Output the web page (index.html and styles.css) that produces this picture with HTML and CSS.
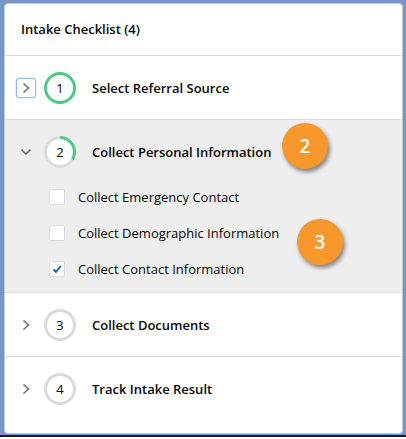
FILE: index.html
```html
<!DOCTYPE html>
<html lang="en">
<head>
    <meta charset="UTF-8">
    <title>Intake Checklist</title>
    <link rel="stylesheet" href="styles.css">
</head>
<body>
    <div class="frame">
        <div class="card">
            <div class="card-header">Intake Checklist (4)</div>

            <!-- Step 1 -->
            <div class="step">
                <div class="step-row">
                    <button class="toggle toggle-focus">
                        <svg width="10" height="12" viewBox="0 0 10 12"><path d="M2.5 1.5 L7.5 6 L2.5 10.5" fill="none" stroke="#706e6b" stroke-width="1.6"/></svg>
                    </button>
                    <div class="step-ring">
                        <svg width="32" height="32" viewBox="0 0 32 32">
                            <circle cx="16" cy="16" r="14.5" fill="#fff" stroke="#4bca81" stroke-width="3"/>
                        </svg>
                        <span class="step-num">1</span>
                    </div>
                    <div class="step-title">Select Referral Source</div>
                </div>
            </div>

            <!-- Step 2 (expanded) -->
            <div class="step step-open">
                <div class="step-row">
                    <button class="toggle">
                        <svg width="12" height="10" viewBox="0 0 12 10"><path d="M1.5 2.5 L6 7 L10.5 2.5" fill="none" stroke="#706e6b" stroke-width="1.6"/></svg>
                    </button>
                    <div class="step-ring">
                        <svg width="32" height="32" viewBox="0 0 32 32">
                            <circle cx="16" cy="16" r="14.5" fill="#fff" stroke="#dddbda" stroke-width="3"/>
                            <circle cx="16" cy="16" r="14.5" fill="none" stroke="#4bca81" stroke-width="3"
                                stroke-dasharray="30.4 100" transform="rotate(-90 16 16)"/>
                        </svg>
                        <span class="step-num">2</span>
                    </div>
                    <div class="step-title">Collect Personal Information</div>
                </div>
                <ul class="tasks">
                    <li class="task"><span class="checkbox"></span>Collect Emergency Contact</li>
                    <li class="task"><span class="checkbox"></span>Collect Demographic Information</li>
                    <li class="task">
                        <span class="checkbox">
                            <svg width="10" height="10" viewBox="0 0 10 10"><path d="M1.5 5.5 L4 8 L8.8 2" fill="none" stroke="#0b5cab" stroke-width="1.8"/></svg>
                        </span>Collect Contact Information
                    </li>
                </ul>
            </div>

            <!-- Step 3 -->
            <div class="step">
                <div class="step-row">
                    <button class="toggle">
                        <svg width="10" height="12" viewBox="0 0 10 12"><path d="M2.5 1.5 L7.5 6 L2.5 10.5" fill="none" stroke="#706e6b" stroke-width="1.6"/></svg>
                    </button>
                    <div class="step-ring">
                        <svg width="32" height="32" viewBox="0 0 32 32">
                            <circle cx="16" cy="16" r="14.5" fill="#fff" stroke="#dddbda" stroke-width="3"/>
                        </svg>
                        <span class="step-num">3</span>
                    </div>
                    <div class="step-title">Collect Documents</div>
                </div>
            </div>

            <!-- Step 4 -->
            <div class="step step-last">
                <div class="step-row">
                    <button class="toggle">
                        <svg width="10" height="12" viewBox="0 0 10 12"><path d="M2.5 1.5 L7.5 6 L2.5 10.5" fill="none" stroke="#706e6b" stroke-width="1.6"/></svg>
                    </button>
                    <div class="step-ring">
                        <svg width="32" height="32" viewBox="0 0 32 32">
                            <circle cx="16" cy="16" r="14.5" fill="#fff" stroke="#dddbda" stroke-width="3"/>
                        </svg>
                        <span class="step-num">4</span>
                    </div>
                    <div class="step-title">Track Intake Result</div>
                </div>
            </div>

            <!-- callout markers -->
            <div class="callout callout-2">2</div>
            <div class="callout callout-3">3</div>
        </div>
    </div>
</body>
</html>
```

FILE: styles.css
```css
body {
    margin: 0;
    font-family: "Open Sans", Lato, sans-serif;
    color: #080707;
}

.frame {
    height: 437px;
    background-color: #7496c8;
    border-bottom: 2px solid #1b1b1b;
    padding: 3px 3px 1px 4px;
    box-sizing: border-box;
}

.card {
    position: relative;
    height: 100%;
    background-color: #ffffff;
    border: 1px solid #c9c9c9;
    border-radius: 4px;
    box-sizing: border-box;
    overflow: hidden;
}

.card-header {
    height: 51px;
    line-height: 51px;
    padding-left: 16px;
    font-size: 13px;
    font-weight: 600;
    border-bottom: 1px solid #dddbda;
}

.step {
    border-bottom: 1px solid #dddbda;
}

.step-last {
    border-bottom: none;
}

.step-open {
    background-color: #eeeeee;
    padding-bottom: 5px;
}

.step-row {
    height: 63px;
    display: flex;
    align-items: center;
    padding-left: 11px;
}

.toggle {
    width: 20px;
    height: 20px;
    padding: 0;
    margin-right: 8px;
    display: flex;
    align-items: center;
    justify-content: center;
    background: transparent;
    border: 1px solid transparent;
    border-radius: 3px;
}

.toggle-focus {
    border-color: #8fb8ea;
    background-color: #ffffff;
    box-shadow: 0 0 2px #b6d3f5;
}

.step-ring {
    position: relative;
    width: 32px;
    height: 32px;
    margin-right: 16px;
}

.step-ring svg {
    display: block;
}

.step-num {
    position: absolute;
    inset: 0;
    display: flex;
    align-items: center;
    justify-content: center;
    font-size: 13px;
}

.step-title {
    font-size: 13px;
    font-weight: 600;
}

.tasks {
    list-style: none;
    margin: -4px 0 0;
    padding: 0;
}

.task {
    height: 36px;
    display: flex;
    align-items: center;
    padding-left: 44px;
    font-size: 13px;
}

.checkbox {
    width: 14px;
    height: 14px;
    margin-right: 13px;
    background-color: #ffffff;
    border: 1px solid #dddbda;
    border-radius: 2px;
    display: flex;
    align-items: center;
    justify-content: center;
}

.callout {
    position: absolute;
    width: 46px;
    height: 46px;
    border-radius: 50%;
    background-color: #f8972c;
    color: #ffffff;
    font-size: 19px;
    font-weight: 600;
    display: flex;
    align-items: center;
    justify-content: center;
    box-shadow: 2px 3px 4px rgba(0, 0, 0, 0.45);
}

.callout-2 {
    left: 277px;
    top: 119px;
}

.callout-3 {
    left: 292px;
    top: 215px;
}
```
